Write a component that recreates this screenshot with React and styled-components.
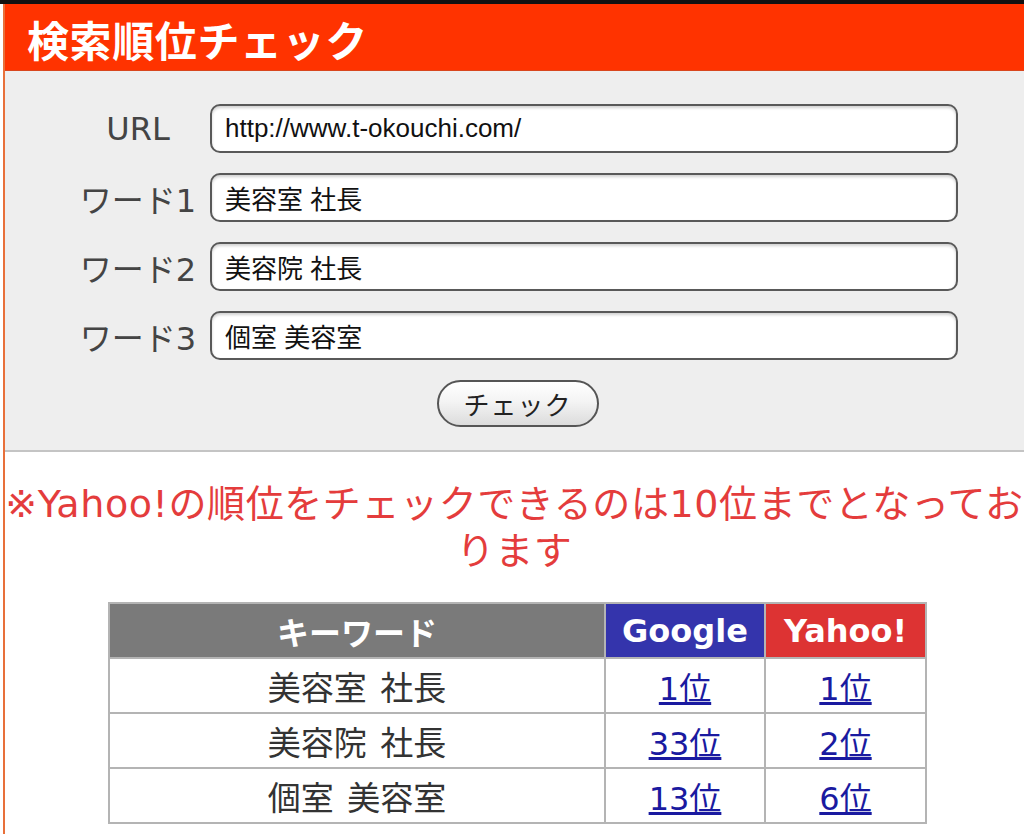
import React from "react";
import styled, { createGlobalStyle } from "styled-components";

const GlobalStyle = createGlobalStyle`
  html, body { margin: 0; padding: 0; background: #ffffff; }
  body { font-family: "DejaVu Sans", "Noto Sans CJK JP", sans-serif; }
`;

const TopBar = styled.div`
  height: 4px;
  background: #111111;
`;

const Frame = styled.div`
  margin-left: 3px;
  border-left: 2px solid #e8703a;
  min-height: calc(100vh - 4px);
  background: #ffffff;
`;

const Header = styled.header`
  height: 66px;
  background: #ff3300;
  border-bottom: 1px solid #d8461e;
  display: flex;
  align-items: center;
  padding-left: 22px;
`;

const Title = styled.h1`
  margin: 0;
  font-family: "Noto Sans CJK JP", sans-serif;
  font-weight: 700;
  font-size: 42px;
  letter-spacing: 0.6px;
  color: #ffffff;
  line-height: 1;
  padding-top: 4px;
`;

const Panel = styled.form`
  background: #eeeeee;
  padding: 33px 0 23px;
  border-bottom: 2px solid #c4c4c4;
  display: flex;
  flex-direction: column;
  gap: 20px;
`;

const FieldRow = styled.div`
  display: flex;
  align-items: center;
  gap: 9px;
  padding-left: 70px;
`;

const Label = styled.label`
  width: 126px;
  text-align: center;
  font-family: "DejaVu Sans", "Noto Sans CJK JP", sans-serif;
  font-size: 32px;
  color: #444444;
  white-space: nowrap;
`;

const Field = styled.input`
  box-sizing: border-box;
  width: 748px;
  height: 49px;
  border: 2px solid #595959;
  border-radius: 10px;
  background: #ffffff;
  box-shadow: inset 0 2px 3px rgba(0, 0, 0, 0.18);
  padding: 0 13px;
  font-family: "Liberation Sans", "Noto Sans CJK JP", sans-serif;
  font-size: 26px;
  color: #111111;
  outline: none;
`;

const ButtonRow = styled.div`
  display: flex;
  justify-content: center;
  padding-left: 6px;
`;

const CheckButton = styled.button`
  box-sizing: border-box;
  width: 162px;
  height: 47px;
  border: 2px solid #555555;
  border-radius: 24px;
  background: linear-gradient(#ffffff, #f4f4f4 45%, #dcdcdc);
  font-family: "Noto Sans CJK JP", sans-serif;
  font-size: 26px;
  color: #222222;
  padding: 0;
  letter-spacing: 1px;
  cursor: pointer;
`;

const Notice = styled.p`
  margin: 29px 0 0;
  text-align: center;
  color: #e43c3c;
  font-family: "DejaVu Sans", "Noto Sans CJK JP", sans-serif;
  font-size: 38px;
  letter-spacing: 0.6px;
  line-height: 47px;
`;

const TableWrap = styled.div`
  display: flex;
  justify-content: center;
  padding-left: 6px;
  margin-top: 27px;
`;

const RankTable = styled.table`
  border-collapse: collapse;
  table-layout: fixed;
  width: 811px;
`;

const HeadCell = styled.th`
  width: ${(p) => p.$w}px;
  height: 53px;
  padding: 0;
  border: 2px solid #b4b4b4;
  background: ${(p) => p.$bg};
  color: #ffffff;
  font-family: ${(p) =>
    p.$latin
      ? '"DejaVu Sans", "Noto Sans CJK JP", sans-serif'
      : '"Noto Sans CJK JP", sans-serif'};
  font-weight: 700;
  font-size: 32px;
  text-align: center;
`;

const Cell = styled.td`
  height: 53px;
  padding: 0;
  border: 2px solid #b4b4b4;
  background: #ffffff;
  text-align: center;
  color: #333333;
  font-family: "Noto Sans CJK JP", sans-serif;
  font-size: 33px;
  word-spacing: 6px;
`;

const RankLink = styled.a`
  color: #1a1aa0;
  text-decoration: underline;
  font-family: "DejaVu Sans", "Noto Sans CJK JP", sans-serif;
  font-size: 32px;
`;

const fields = [
  { label: "URL", value: "http://www.t-okouchi.com/" },
  { label: "ワード1", value: "美容室 社長" },
  { label: "ワード2", value: "美容院 社長" },
  { label: "ワード3", value: "個室 美容室" },
];

const rows = [
  { kw: "美容室 社長", google: "1位", yahoo: "1位" },
  { kw: "美容院 社長", google: "33位", yahoo: "2位" },
  { kw: "個室 美容室", google: "13位", yahoo: "6位" },
];

export default function App() {
  return (
    <>
      <GlobalStyle />
      <TopBar />
      <Frame>
        <Header>
          <Title>検索順位チェック</Title>
        </Header>
        <Panel onSubmit={(e) => e.preventDefault()}>
          {fields.map((f) => (
            <FieldRow key={f.label}>
              <Label>{f.label}</Label>
              <Field defaultValue={f.value} />
            </FieldRow>
          ))}
          <ButtonRow>
            <CheckButton type="submit">チェック</CheckButton>
          </ButtonRow>
        </Panel>
        <Notice>※Yahoo!の順位をチェックできるのは10位までとなっております</Notice>
        <TableWrap>
          <RankTable>
            <thead>
              <tr>
                <HeadCell $w={494} $bg="#7a7a7a">キーワード</HeadCell>
                <HeadCell $w={158} $bg="#3434ac" $latin>Google</HeadCell>
                <HeadCell $w={159} $bg="#dd3333" $latin>Yahoo!</HeadCell>
              </tr>
            </thead>
            <tbody>
              {rows.map((r) => (
                <tr key={r.kw}>
                  <Cell>{r.kw}</Cell>
                  <Cell>
                    <RankLink href="#">{r.google}</RankLink>
                  </Cell>
                  <Cell>
                    <RankLink href="#">{r.yahoo}</RankLink>
                  </Cell>
                </tr>
              ))}
            </tbody>
          </RankTable>
        </TableWrap>
      </Frame>
    </>
  );
}
